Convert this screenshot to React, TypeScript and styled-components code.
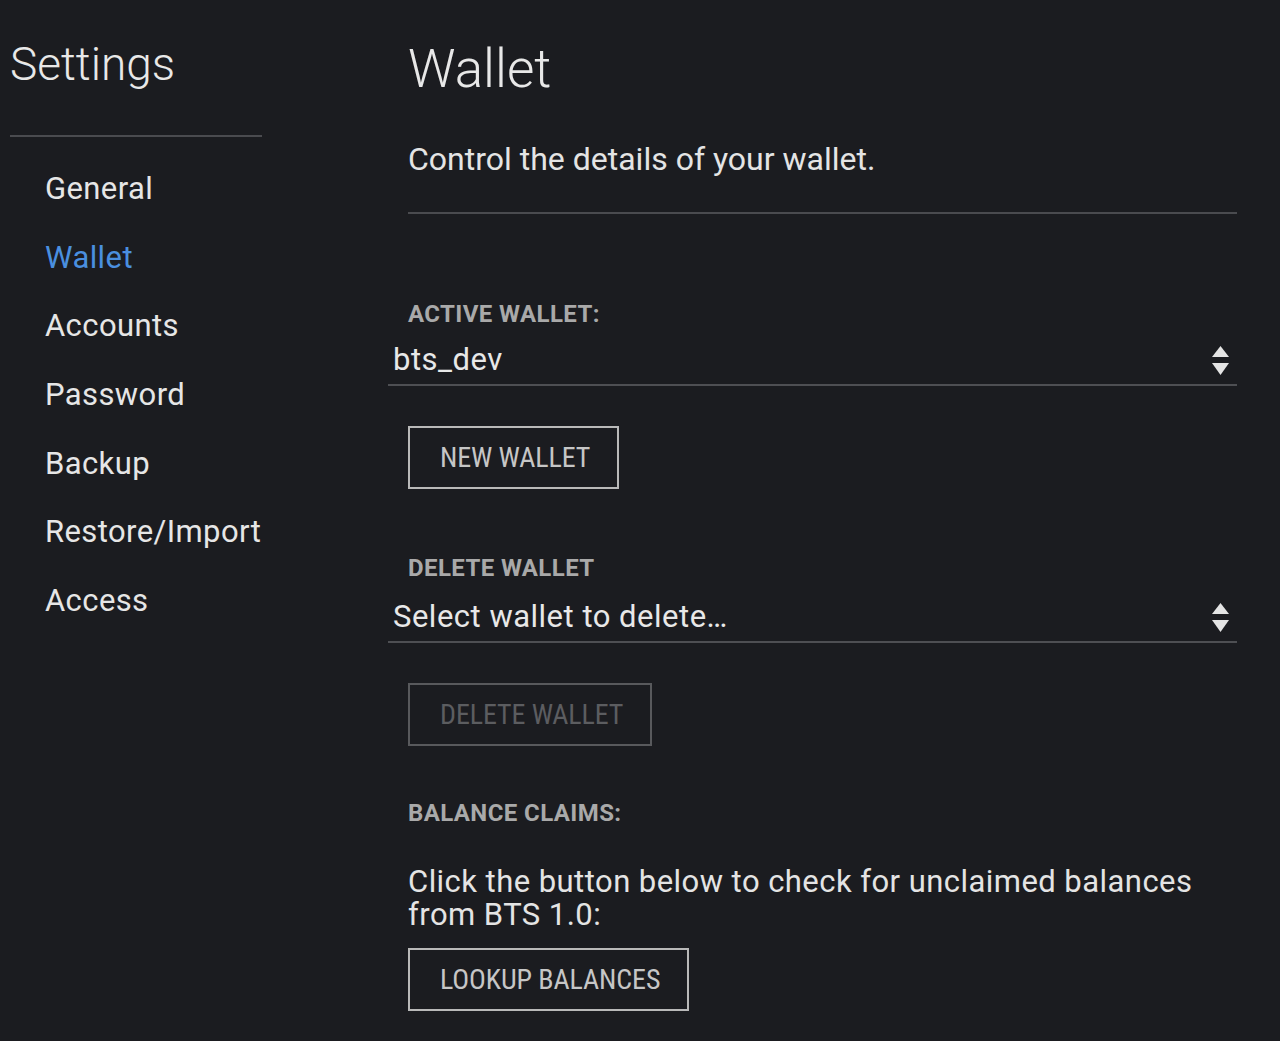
import styled, { createGlobalStyle } from 'styled-components';

const GlobalStyle = createGlobalStyle`
  html, body {
    margin: 0;
    padding: 0;
    background: #1b1c20;
  }
  body {
    font-family: Roboto, "Liberation Sans", sans-serif;
    color: #e6e6e6;
  }
`;

const Page = styled.div`
  display: flex;
  min-height: 1041px;
  background: #1b1c20;
`;

const Sidebar = styled.aside`
  width: 252px;
  padding-left: 10px;
  flex: 0 0 auto;
`;

const SideTitle = styled.h1`
  margin: 41px 0 0;
  font-size: 46px;
  line-height: 46px;
  font-weight: 300;
  color: #e8e8e8;
`;

const Rule = styled.div<{ $top: number }>`
  margin-top: ${(p) => p.$top}px;
  height: 2px;
  background: #4a4b4f;
`;

const NavList = styled.nav`
  margin-top: 18px;
  display: flex;
  flex-direction: column;
`;

const NavItem = styled.a<{ $active?: boolean }>`
  display: block;
  padding-left: 35px;
  height: 68.7px;
  font-size: 31px;
  line-height: 68.7px;
  letter-spacing: 0.4px;
  color: ${(p) => (p.$active ? '#4a8fdf' : '#e6e6e6')};
  text-decoration: none;
  cursor: pointer;
`;

const Main = styled.main`
  margin-left: 146px;
  width: 829px;
  flex: 0 0 auto;
`;

const Heading = styled.h2`
  margin: 43px 0 0;
  font-size: 53px;
  line-height: 53px;
  font-weight: 300;
  color: #e8e8e8;
`;

const Intro = styled.p`
  margin: 47px 0 0;
  font-size: 32px;
  line-height: 32px;
  color: #e4e4e4;
`;

const Label = styled.div<{ $top: number }>`
  margin-top: ${(p) => p.$top}px;
  font-size: 24px;
  line-height: 24px;
  font-weight: 700;
  letter-spacing: 0.4px;
  color: #a9a9a9;
`;

const SelectBox = styled.div<{ $top: number }>`
  margin: ${(p) => p.$top}px 0 0 -20px;
  padding: 0 8px 9px 5px;
  border-bottom: 2px solid #4e4f53;
  display: flex;
  align-items: center;
  justify-content: space-between;
  font-size: 31px;
  line-height: 30px;
  letter-spacing: 0.5px;
  color: #e8e8e8;
  cursor: pointer;
`;

const Button = styled.button<{ $top: number; $disabled?: boolean }>`
  display: block;
  margin-top: ${(p) => p.$top}px;
  box-sizing: border-box;
  height: 63px;
  padding: 0 27px 0 30px;
  background: transparent;
  border: 2px solid ${(p) => (p.$disabled ? '#58595c' : '#b9b9b9')};
  color: ${(p) => (p.$disabled ? '#5c5d60' : '#c6c6c6')};
  font-family: Roboto, "Liberation Sans", sans-serif;
  font-size: 28px;
  font-stretch: 85%;
  line-height: 59px;
  letter-spacing: -0.1px;
  text-transform: uppercase;
  cursor: ${(p) => (p.$disabled ? 'default' : 'pointer')};
`;

const Body = styled.p`
  margin: 40px 0 0;
  font-size: 31px;
  line-height: 33px;
  letter-spacing: 0.45px;
  color: #e4e4e4;
`;

function Arrows() {
  return (
    <svg width="17" height="29" viewBox="0 0 17 29">
      <polygon points="8.5,0 17,11 0,11" fill="#e4e4e4" />
      <polygon points="0,17 17,17 8.5,29" fill="#e4e4e4" />
    </svg>
  );
}

const navItems = ['General', 'Wallet', 'Accounts', 'Password', 'Backup', 'Restore/Import', 'Access'];

export default function App() {
  return (
    <>
      <GlobalStyle />
      <Page>
        <Sidebar>
          <SideTitle>Settings</SideTitle>
          <Rule $top={48} />
          <NavList>
            {navItems.map((item) => (
              <NavItem key={item} $active={item === 'Wallet'}>
                {item}
              </NavItem>
            ))}
          </NavList>
        </Sidebar>
        <Main>
          <Heading>Wallet</Heading>
          <Intro>Control the details of your wallet.</Intro>
          <Rule $top={37} />

          <Label $top={88}>ACTIVE WALLET:</Label>
          <SelectBox $top={19}>
            <span>bts_dev</span>
            <Arrows />
          </SelectBox>
          <Button $top={40}>New Wallet</Button>

          <Label $top={67}>DELETE WALLET</Label>
          <SelectBox $top={22}>
            <span>Select wallet to delete…</span>
            <Arrows />
          </SelectBox>
          <Button $top={40} $disabled>
            Delete Wallet
          </Button>

          <Label $top={55}>BALANCE CLAIMS:</Label>
          <Body>Click the button below to check for unclaimed balances from BTS 1.0:</Body>
          <Button $top={17}>Lookup Balances</Button>
        </Main>
      </Page>
    </>
  );
}
